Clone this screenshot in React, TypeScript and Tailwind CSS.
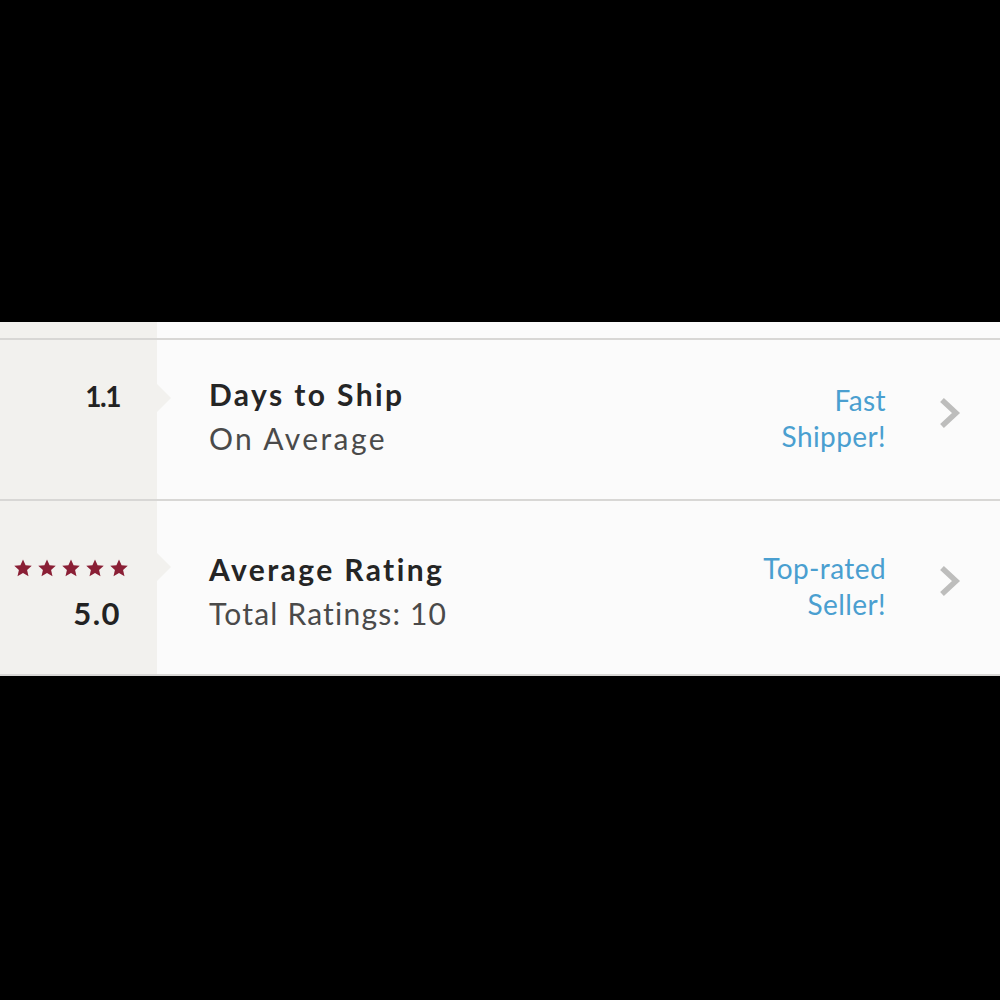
import React from "react";

const font = { fontFamily: "Lato, 'Open Sans', sans-serif" };

function Star() {
  return (
    <svg viewBox="0 0 24 24" className="h-[20px] w-[20px]" fill="#8a1f35">
      <path d="M12 1.8l3.1 6.9 7.4.7-5.6 5 1.7 7.4L12 17.9l-6.6 3.9 1.7-7.4-5.6-5 7.4-.7z" />
    </svg>
  );
}

function Chevron() {
  return (
    <svg viewBox="0 0 24 32" className="h-[32px] w-[24px]" fill="none" stroke="#bdbdbc" strokeWidth="5.5" strokeLinecap="butt" strokeLinejoin="miter">
      <path d="M4 3l14 13L4 29" />
    </svg>
  );
}

function Notch({ top }: { top: string }) {
  return (
    <div
      className={`absolute left-[157px] h-0 w-0 border-y-[14px] border-l-[14px] border-y-transparent border-l-[#f2f1ee] ${top}`}
    />
  );
}

export default function App() {
  return (
    <div className="flex h-[1000px] w-[1000px] flex-col bg-black" style={font}>
      <div className="h-[322px]" />
      <div className="flex flex-col">
        {/* top strip */}
        <div className="flex h-[18px] border-b-2 border-[#d8d7d5]">
          <div className="w-[157px] bg-[#f2f1ee]" />
          <div className="flex-1 bg-[#fbfbfb]" />
        </div>

        {/* days to ship */}
        <div className="relative flex h-[161px] border-b-2 border-[#d8d7d5]">
          <div className="w-[157px] bg-[#f2f1ee] pr-[37px] pt-[38px] text-right text-[28px] font-bold leading-[36px] tracking-[-1.5px] text-[#222]">
            1.1
          </div>
          <Notch top="top-[44px]" />
          <div className="flex flex-1 items-start bg-[#fbfbfb] pl-[52px] pt-[32px]">
            <div className="flex-1">
              <div className="text-[30px] font-bold leading-[44px] tracking-[2.4px] text-[#252525]">Days to Ship</div>
              <div className="text-[30px] leading-[44px] tracking-[2.4px] text-[#4a4a4a]">On Average</div>
            </div>
            <div className="pt-[10px] text-right text-[28px] leading-[36px] tracking-[0.4px] text-[#4a9fd0]">
              Fast
              <br />
              Shipper!
            </div>
            <div className="w-[114px] pl-[52px] pt-[25px]">
              <Chevron />
            </div>
          </div>
        </div>

        {/* rating */}
        <div className="relative flex h-[175px] border-b-2 border-[#d8d7d5]">
          <div className="flex w-[157px] flex-col items-end bg-[#f2f1ee] pr-[28px] pt-[57px]">
            <div className="flex gap-[4px]">
              <Star />
              <Star />
              <Star />
              <Star />
              <Star />
            </div>
            <div className="mr-[8px] mt-[17px] text-[31px] font-bold leading-[36px] tracking-[1.5px] text-[#222]">5.0</div>
          </div>
          <Notch top="top-[52px]" />
          <div className="flex flex-1 items-start bg-[#fbfbfb] pl-[52px] pt-[46px]">
            <div className="flex-1">
              <div className="text-[30px] font-bold leading-[44px] tracking-[2.4px] text-[#252525]">Average Rating</div>
              <div className="text-[30px] leading-[44px] tracking-[1.2px] text-[#4a4a4a]">Total Ratings: 10</div>
            </div>
            <div className="pt-[3px] text-right text-[28px] leading-[36px] tracking-[0.4px] text-[#4a9fd0]">
              Top-rated
              <br />
              Seller!
            </div>
            <div className="w-[114px] pl-[52px] pt-[18px]">
              <Chevron />
            </div>
          </div>
        </div>
      </div>
      <div className="flex-1" />
    </div>
  );
}
